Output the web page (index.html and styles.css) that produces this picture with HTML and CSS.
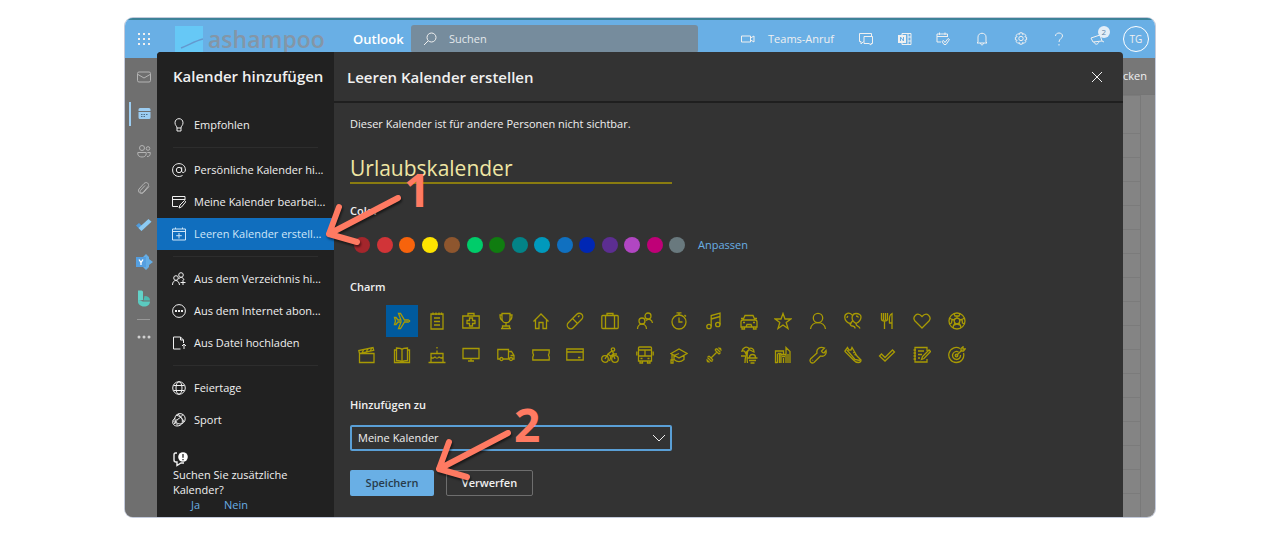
FILE: index.html
```html
<!DOCTYPE html>
<html lang="de">
<head>
<meta charset="utf-8">
<title>Kalender hinzufügen</title>
<link rel="stylesheet" href="styles.css">
</head>
<body>
<main class="window">
  <div class="app">
    <header class="topbar">
      <button class="waffle" aria-label="App-Startfeld"><svg width="14" height="14" viewBox="0 0 14 14" fill="currentColor"><path d="M1 1h2v2H1zM6 1h2v2H6zM11 1h2v2h-2zM1 6h2v2H1zM6 6h2v2H6zM11 6h2v2h-2zM1 11h2v2H1zM6 11h2v2H6zM11 11h2v2h-2z"/></svg></button>
      <div class="brand"><svg width="28" height="26" viewBox="0 0 28 26"><path fill="#66c8f6" d="M0 0h28v26H0z"/><path d="M6 22C14 19 20 15 28 13" stroke="#6499cf" stroke-width="1.5" fill="none"/></svg><span>ashampoo</span></div>
      <span class="product">Outlook</span>
      <label class="search"><svg width="14" height="14" viewBox="0 0 14 14" class="line"><circle cx="8.5" cy="5.5" r="4.5"/><path d="M5 9l-4 4"/></svg><input type="text" placeholder="Suchen" aria-label="Suchen"></label>
      <button class="teams"><svg width="14" height="8" viewBox="0 0 14 8" class="line"><path d="M.5 1h9v6h-9zM9.500 3l3.500-2v6l-3.500-2"/></svg><span>Teams-Anruf</span></button>
      <nav class="tools" aria-label="Werkzeuge">
        <button aria-label="Chat"><svg width="14" height="14" viewBox="0 0 14 14" class="line"><path d="M4.500 9.500L2 12V9.500H.5v-8h12V4M5 4.500h8.500v7H12V13l-2-1.500H5z"/></svg></button>
        <button aria-label="OneNote"><svg width="14" height="14" viewBox="0 0 14 14" class="line"><path d="M4 3V1.500h9v11H4V11M10 1.500v11M10 5h3M10 9h3"/><path d="M0 3h8v8H0z" fill="currentColor" stroke="none"/><path d="M2.500 9V5l3 4V5" stroke="#69afe5"/></svg></button>
        <button aria-label="Mein Tag"><svg width="14" height="14" viewBox="0 0 14 14" class="line"><path d="M5 10H1V2h10.500v3M1 4.500h10M3.500.5V3M9 .5V3M6 9.500l2 3h2l3.500-5-1.500-1-3 4-1.500-2z"/></svg></button>
        <button aria-label="Benachrichtigungen"><svg width="12" height="14" viewBox="0 0 12 14" class="line"><path d="M2 10V5c0-5 8-5 8 0v5l1 1H1zM4.500 11c0 2.500 3 2.500 3 0"/></svg></button>
        <button aria-label="Einstellungen"><svg width="14" height="14" viewBox="0 0 14 14" class="line"><path d="M5.800.8h2.400l.4 1.700 1.500-.9 1.700 1.700-.9 1.500 1.700.4v2.600l-1.700.4.900 1.500-1.700 1.700-1.500-.9-.4 1.700H5.800l-.4-1.700-1.500.9-1.700-1.700.9-1.500-1.700-.4V5.200l1.700-.4-.9-1.500 1.700-1.700 1.500.9z"/><circle cx="7" cy="6.500" r="2.200"/></svg></button>
        <button aria-label="Hilfe"><svg width="10" height="14" viewBox="0 0 10 14" class="line"><path d="M1.500 4c0-4 7-4 7 0 0 2.500-3.500 2.500-3.500 6M5 12v1.500"/></svg></button>
        <button aria-label="Neuigkeiten" class="news"><svg width="16" height="14" viewBox="0 0 16 14" class="line"><path d="M1 6l9-3 2 6-9 1zM4 10c1 3 4 3 5-.5M12 9l2 1"/></svg><span class="badge">2</span></button>
      </nav>
      <button class="avatar">TG</button>
    </header>
    <div class="workspace">
      <nav class="rail" aria-label="Apps">
        <button aria-label="E-Mail"><svg width="14" height="12" viewBox="0 0 14 12" class="line"><rect x=".5" y="1" width="13" height="10" rx="1.500"/><path d="M1 3.500l6 3.500 6-3.500"/></svg></button>
        <button aria-label="Kalender" class="current"><svg width="13" height="13" viewBox="0 0 13 13"><path fill="currentColor" d="M2 1h9q1.500 0 1.500 1.500V4H.5V2.500Q.5 1 2 1zM.5 5h12v5.500q0 1.500-1.500 1.500H2Q.5 12 .5 10.500z"/><path d="M3 7.500h7M3 9.500h4.500" stroke="#4f6f88" stroke-dasharray="1.500 1"/></svg></button>
        <button aria-label="Personen"><svg width="14" height="14" viewBox="0 0 14 14" class="line"><circle cx="5" cy="4" r="2.500"/><circle cx="11" cy="4.500" r="1.800"/><path d="M.8 8.500h8.400V10c0 4-8.400 4-8.400 0zM10 12.500c2.500 0 3.300-1 3.300-4h-3"/></svg></button>
        <button aria-label="Dateien"><svg width="14" height="14" viewBox="0 0 14 14" class="line"><path d="M2 8l5-5.500c2.500-2.500 6 .5 4 3L6 11.500c-1.500 1.500-4-.5-2.500-2.200L8 4.500M2 8c-2 3 2 6 4.500 3.500l5.500-6"/></svg></button>
        <button aria-label="Aufgaben"><svg width="16" height="14" viewBox="0 0 16 14"><path d="M0 7.500L3 5l3.500 3.500L5.500 13z" fill="#4f9bdc"/><path d="M5.500 13L2.500 10 12.500 1l3 2.800z" fill="#8ccbf4"/></svg></button>
        <button aria-label="Viva Engage"><svg width="17" height="16" viewBox="0 0 17 16"><path d="M10 0l3 3v2l4 3-4 3v2l-3 3-3-3V3z" fill="#65aee6"/><path d="M0 3h10v10H0z" fill="#559fe0"/><path d="M3 5.500l2 3 2-3M5 8.500V11" stroke="#fff" fill="none" stroke-width="1.300"/></svg></button>
        <button aria-label="Bookings"><svg width="14" height="17" viewBox="0 0 14 17"><path d="M1 .5h3.500q1.500 0 1.500 1.500v8L1 11z" fill="#63d2c8"/><path d="M7.500 6C11 6 13 7.500 13 10.500H6.500z" fill="#4db9b0"/><path d="M1 10l5 1.500h7c0 3-2.500 5-6 5S1 14 1 12z" fill="#5bcac0"/></svg></button>
        <hr>
        <button class="more" aria-label="Weitere Apps"><svg width="14" height="4" viewBox="0 0 14 4" fill="currentColor"><circle cx="2" cy="2" r="1.500"/><circle cx="7" cy="2" r="1.500"/><circle cx="12" cy="2" r="1.500"/></svg></button>
      </nav>
      <div class="calendar">
        <div class="commands"><button>Drucken</button></div>
        <div class="hours"></div>
      </div>
    </div>
  </div>

  <section class="dialog" role="dialog" aria-labelledby="dialog-title">
    <aside class="side">
      <h2>Kalender hinzufügen</h2>
      <nav>
        <button class="item"><svg width="14" height="14" viewBox="0 0 14 14" class="line"><path d="M5 10C5 8 3 7.500 3 4.800c0-5.500 8-5.500 8 0C11 7.500 9 8 9 10zM5 10v3h4v-3"/></svg>Empfohlen</button>
        <hr>
        <button class="item"><svg width="14" height="14" viewBox="0 0 14 14" class="line"><circle cx="7" cy="7" r="2.700"/><path d="M9.700 4.200V8c0 2.500 3.500 2 3.700-1C13.400-1.500.6-1.500.6 7c0 6 6 7.800 9.900 5.500"/></svg>Persönliche Kalender hi...</button>
        <button class="item"><svg width="14" height="14" viewBox="0 0 14 14" class="line"><path d="M6 11.500H.5v-10h12.500V5M.5 4.500H13M7 13l1-3 4.500-4.500 1.300 1.300L9.500 12z"/></svg>Meine Kalender bearbei...</button>
        <button class="item selected"><svg width="14" height="14" viewBox="0 0 14 14" class="line"><path d="M.5 2h13v11H.5zM.5 4.500h13M3.500.5V2M10.500.5V2M7 6v5.500M4.200 8.700h5.600"/></svg>Leeren Kalender erstell...</button>
        <hr>
        <button class="item"><svg width="14" height="14" viewBox="0 0 14 14" class="line"><circle cx="4" cy="6" r="2.300"/><circle cx="9" cy="3" r="2.300"/><path d="M.5 13c0-6 6.500-6 7 0M6.500 7c2-2.500 4.500-2 5.500 1M11 8v5M8.500 10.500h5"/></svg>Aus dem Verzeichnis hi...</button>
        <button class="item"><svg width="14" height="14" viewBox="0 0 14 14" class="line"><circle cx="7" cy="7" r="6.400"/><path d="M3 7h8" stroke-width="1.800" stroke-dasharray="2 1"/></svg>Aus dem Internet abon...</button>
        <button class="item"><svg width="14" height="14" viewBox="0 0 14 14" class="line"><path d="M8.500 13H1.500V1h7l3 3v3M8.500 1v3h3M12 13V8.500M10 10l2-2 2 2"/></svg>Aus Datei hochladen</button>
        <hr>
        <button class="item"><svg width="14" height="14" viewBox="0 0 14 14" class="line"><circle cx="7" cy="7" r="6.300"/><ellipse cx="7" cy="7" rx="3" ry="6.300"/><path d="M1.500 4.500h11M1.500 9.500h11"/></svg>Feiertage</button>
        <button class="item"><svg width="14" height="14" viewBox="0 0 14 14" class="line"><circle cx="8" cy="5.800" r="5.200"/><path d="M4 2c4 1 7 4 8 7M11 1.500C9 4 7 6 3.500 7.500M6 1c4 3 5 6 4 9.500M3 5C-1 8 .5 13 5 13c2.500 0 4-1 5-2.500M1 7.500l5 5M2 11l3-3.500"/></svg>Sport</button>
      </nav>
      <div class="feedback">
        <svg width="16" height="16" viewBox="0 0 16 16" class="line"><path d="M4 2H2.500Q1 2 1 4v5q0 2 2 2h1v3.500L8 12h3" stroke-width="1.400"/><circle cx="10" cy="6" r="4.800" fill="#fff" stroke="none"/><path d="M10 3v3.700M10 8v1.200" stroke="#212121" stroke-width="1.300"/></svg>
        <p>Suchen Sie zusätzliche Kalender?</p>
        <div class="answers"><a href="#">Ja</a><a href="#">Nein</a></div>
      </div>
    </aside>

    <form class="content">
      <header class="heading">
        <h1 id="dialog-title">Leeren Kalender erstellen</h1>
        <button type="button" class="close" aria-label="Schließen"><svg width="12" height="12" viewBox="0 0 12 12" class="line"><path d="M1 1l10 10M11 1L1 11"/></svg></button>
      </header>
      <div class="fields">
        <p class="hint">Dieser Kalender ist für andere Personen nicht sichtbar.</p>
        <input class="name" type="text" value="Urlaubskalender" aria-label="Kalendername">
        <h3>Color</h3>
        <div class="colors">
          <div class="swatches" role="radiogroup" aria-label="Color">
            <input type="radio" name="color" class="c-darkred" aria-label="Dunkelrot">
            <input type="radio" name="color" class="c-red" aria-label="Rot">
            <input type="radio" name="color" class="c-orange" aria-label="Orange">
            <input type="radio" name="color" class="c-yellow" aria-label="Gelb">
            <input type="radio" name="color" class="c-brown" aria-label="Braun">
            <input type="radio" name="color" class="c-mint" aria-label="Hellgrün">
            <input type="radio" name="color" class="c-green" aria-label="Grün">
            <input type="radio" name="color" class="c-teal" aria-label="Petrol">
            <input type="radio" name="color" class="c-cyan" aria-label="Cyan">
            <input type="radio" name="color" class="c-blue" aria-label="Blau">
            <input type="radio" name="color" class="c-navy" aria-label="Dunkelblau">
            <input type="radio" name="color" class="c-purple" aria-label="Violett">
            <input type="radio" name="color" class="c-orchid" aria-label="Flieder">
            <input type="radio" name="color" class="c-magenta" aria-label="Magenta">
            <input type="radio" name="color" class="c-gray" aria-label="Grau">
          </div>
          <a href="#">Anpassen</a>
        </div>
        <h3>Charm</h3>
        <div class="charms" role="radiogroup" aria-label="Charm">
          <label class="first"><input type="radio" name="charm" aria-label="Flugzeug" checked><svg viewBox="0 0 18 18"><path d="M1.500 5.500H3L5 8h3L5.500 1.500h2L11.500 8h4q2.500 1 0 2h-4l-4 6.500h-2L8 10H5l-2 2.500H1.500L2.500 9z"/></svg></label>
          <label><input type="radio" name="charm" aria-label="Liste"><svg viewBox="0 0 18 18"><path d="M3 2h12v15H3zM5 .5V3M8 .5V3M11 .5V3M13.500.5V3M6 6h6M6 9.500h6M6 13h6"/></svg></label>
          <label><input type="radio" name="charm" aria-label="Erste Hilfe"><svg viewBox="0 0 18 18"><path d="M.8 4h16.400v12H.8zM6 4V1.500h6V4M7.500 6h3v2.500H13v3h-2.500V14h-3v-2.500H5v-3h2.500z"/></svg></label>
          <label><input type="radio" name="charm" aria-label="Pokal"><svg viewBox="0 0 18 18"><path d="M5 1.500h8V7c0 5-8 5-8 0zM5 3H3c0 4 1 5.500 3 5.500M13 3h2c0 4-1 5.500-3 5.500M9 11v3M5.500 16.500V14h7v2.500zM4 16.500h10"/></svg></label>
          <label><input type="radio" name="charm" aria-label="Haus"><svg viewBox="0 0 18 18"><path d="M1.500 9.500L9 2l7.500 7.500M3.500 8v8.500H7v-6h4v6h3.500V8"/></svg></label>
          <label><input type="radio" name="charm" aria-label="Tablette"><svg viewBox="0 0 18 18"><rect x="5.500" y="-.5" width="7" height="19" rx="3.500" transform="rotate(45 9 9)"/><path d="M6.500 6.500l5 5M12 5l1.500-1.500"/></svg></label>
          <label><input type="radio" name="charm" aria-label="Koffer"><svg viewBox="0 0 18 18"><rect x=".8" y="3.500" width="16.400" height="13" rx="1"/><path d="M6 3.500v-2h6v2M4.500 3.500v13M13.500 3.500v13"/></svg></label>
          <label><input type="radio" name="charm" aria-label="Personen"><svg viewBox="0 0 18 18"><circle cx="6" cy="9" r="3"/><circle cx="12" cy="4" r="3"/><path d="M1.500 17c0-6.500 9-6.500 9 0M10 8.500C13 6 16 8 16.500 11"/></svg></label>
          <label><input type="radio" name="charm" aria-label="Stoppuhr"><svg viewBox="0 0 18 18"><circle cx="9" cy="10" r="7"/><path d="M6.500.8h5M9 1v2M9 5.500V10h3.500M14.500 3L16 4.500"/></svg></label>
          <label><input type="radio" name="charm" aria-label="Musik"><svg viewBox="0 0 18 18"><circle cx="4" cy="14.500" r="2.200"/><circle cx="12.800" cy="12.500" r="2.200"/><path d="M6.200 14.500V3.500L15 1v11.500M6.200 7L15 4.500"/></svg></label>
          <label><input type="radio" name="charm" aria-label="Auto"><svg viewBox="0 0 18 18"><path d="M3 8l2-4.500h8L15 8M1 10q0-2 2-2h12q2 0 2 2v5H1zM2 15v2h2.500v-2M13.500 15v2H16v-2M6 15l1-2.500h4l1 2.500M1 6.500h2.500M14.500 6.500H17"/><path d="M3 10.500h2M13 10.500h2"/></svg></label>
          <label><input type="radio" name="charm" aria-label="Stern"><svg viewBox="0 0 18 18"><path d="M9 1.500l2 5.500h5.800l-4.600 3.500 1.800 6L9 13l-5 3.500 1.800-6L1.200 7H7z"/></svg></label>
          <label><input type="radio" name="charm" aria-label="Person"><svg viewBox="0 0 18 18"><circle cx="9" cy="6" r="4.700"/><path d="M1.500 17c1-8.500 14-8.500 15 0"/></svg></label>
          <label><input type="radio" name="charm" aria-label="Ballons"><svg viewBox="0 0 18 18"><path d="M8.500 3.500C5.500-1 .5 1.500.8 5.500.8 8.500 3.500 11 6.500 11.500l2-2.500M12 1.500c-4 0-5 5-2.500 8l2.500 2c3-1.500 5-3.500 5-6.500 0-2-2-3.500-5-3.500zM5.500 12.500l2-1M6.500 11.500c-1 4 5 1 4.500 5M12 11.500c0 3.500 3 1.500 4 5M12 4c1.500 0 2 .5 2.500 1.500M4 4c-1 1-1 1.500-1 2"/></svg></label>
          <label><input type="radio" name="charm" aria-label="Besteck"><svg viewBox="0 0 18 18"><path d="M3.500 1v6q0 2 3 2t3-2V1M5.500 1v7M7.500 1v7M6.500 9v8M14 17V1.500c-3 1-3 5-2.500 9.500H14"/></svg></label>
          <label><input type="radio" name="charm" aria-label="Herz"><svg viewBox="0 0 18 18"><path d="M9 16L2 9C-1 5 4-1 9 4.500 14-1 19 5 16 9z"/></svg></label>
          <label><input type="radio" name="charm" aria-label="Fußball"><svg viewBox="0 0 18 18"><circle cx="9" cy="9" r="8"/><circle cx="9" cy="9" r="2.800"/><path d="M6 1.500L7 4h4l1-2.500M16.500 6L14 7.500l.5 3.500 2.500 1M1.500 6L4 7.500 3.500 11 1 12M5 16l.5-2.500L9 12l3.500 1.500L13 16M9 4v2M4 7.500l2.500.5M14 7.500L11.500 8M5.500 13.500L7 11M12.500 13.500L11 11"/></svg></label>
          <label><input type="radio" name="charm" aria-label="Film"><svg viewBox="0 0 18 18"><path d="M1.500 7.500h14.500v9H1.500zM1.500 7.500L.8 4.500 15 1.500l.7 2.800zM4 6.500L6 3.500M8 6l2-3M12 5l2-3"/></svg></label>
          <label><input type="radio" name="charm" aria-label="Buch"><svg viewBox="0 0 18 18"><path d="M9 3.500C8 2 5 2 3.500 2v12.500c2 0 4.500 0 5.500 1.500 1-1.500 3.500-1.500 5.500-1.500V2C13 2 10 2 9 3.500zM9 3.500V16M3.500 4h-2v12.500h15V4h-2"/></svg></label>
          <label><input type="radio" name="charm" aria-label="Torte"><svg viewBox="0 0 18 18"><path d="M3 16V7.500h12V16M.5 16.500h17M9 4.500v3M9 1v1.500M3 11c2 2.500 3.500 0 4 0 1 1.500 3 1.500 4 0 1 0 2 2.500 4 0"/></svg></label>
          <label><input type="radio" name="charm" aria-label="Bildschirm"><svg viewBox="0 0 18 18"><path d="M1 2.500h16v10H1zM9 12.500v2.500M6 15h6"/></svg></label>
          <label><input type="radio" name="charm" aria-label="Lieferwagen"><svg viewBox="0 0 18 18"><path d="M3 13H.8V3.500h10.700V13H6M11.500 5.500h3l2.500 4V13h-1.500M13.500 9.500H17M11.500 13h1"/><circle cx="4.500" cy="13" r="1.500"/><circle cx="14" cy="13" r="1.500"/></svg></label>
          <label><input type="radio" name="charm" aria-label="Ticket"><svg viewBox="0 0 18 18"><path d="M.8 4h16.400v3q-1.500 2 0 4v3H.8v-3q1.500-2 0-4z"/></svg></label>
          <label><input type="radio" name="charm" aria-label="Kreditkarte"><svg viewBox="0 0 18 18"><path d="M.8 3h16.400v11H.8zM.8 6h16.400M12 11.500h2.500"/></svg></label>
          <label><input type="radio" name="charm" aria-label="Fahrrad"><svg viewBox="0 0 18 18"><circle cx="4" cy="13" r="3.300"/><circle cx="14" cy="13" r="3.300"/><circle cx="12" cy="3.500" r="1.700"/><path d="M4 13l3-5 4-3 2 3h3M7 8l3 2.500L8.500 15M10 10.500L12 8l2 5"/></svg></label>
          <label><input type="radio" name="charm" aria-label="Bus"><svg viewBox="0 0 18 18"><path d="M2.500 2q0-1 1-1h11q1 0 1 1v13h-13zM2.500 4h13M2.500 10h13M9 4v6M4 15v2h2.500v-2M11.500 15v2H14v-2M.8 5.500v4M17.200 5.500v4M4.500 12.500h2M11.500 12.500h2"/></svg></label>
          <label><input type="radio" name="charm" aria-label="Studium"><svg viewBox="0 0 18 18"><path d="M1 7.500L9 3l8 4.500L9 12zM4 9.500v4c3 2.500 7 2.500 10 0v-4M2 8v6M1 14h2v3H1zM9 7.500l-5 2"/></svg></label>
          <label><input type="radio" name="charm" aria-label="Hantel"><svg viewBox="0 0 18 18"><path d="M6.500 11.500l5-5M10 4l4 4M11.500 2.500l4 4M4 10l4 4M2.500 11.500l4 4M10 4l1.500-1.500M14 8l1.500-1.500M4 10l-1.500 1.500M8 14l-1.500 1.500M13.500 1.500l3 3M1.500 13.500l3 3M15 3l1-1M3 15l-1 1"/></svg></label>
          <label><input type="radio" name="charm" aria-label="Strand"><svg viewBox="0 0 18 18"><path d="M2 5c1-4 5-5 7-2.500 3-1 5 .5 5 3.500L9 3.500 5.500 7C5 5 4 4.500 2 5zM9 3.500C6 7 5 12 5 17M7.500 6C7 10 7 14 7.500 17M1 10h4M7.500 12h10M9.500 11.500c0-4 6-4 6 0M9 14.500h7M10.500 17h4"/></svg></label>
          <label><input type="radio" name="charm" aria-label="Stadt"><svg viewBox="0 0 18 18"><path d="M1.500 17V5h8v3M3.500 17V8M5.500 7.500V17M7 17V8.500h5V17M9.500 17v-5M12 8V1.500l4 4V17M14 8v9M3.500 7.500h4M1 16.500h2.500M8 10.500h3"/></svg></label>
          <label><input type="radio" name="charm" aria-label="Werkzeug"><svg viewBox="0 0 18 18"><path d="M15.500 2l-3 3 1 1.500 1.500.5 2-2.500c1 4-2 6.500-5.500 5.500L5 16.500C2.500 18 0 15.500 1.500 13L8 7C7 3 11 0 15.500 2z"/><path d="M3.500 14.500l.5-.5"/></svg></label>
          <label><input type="radio" name="charm" aria-label="Laufschuh"><svg viewBox="0 0 18 18"><path d="M1 5l2.500-3.500L5 4h2l1-2.500L13 10l4 4q0 2.500-2.500 2.500-3 0-5-2.500L1 5.500zM3 4l8 9.500 5 1M9 7l2-1M10.500 9l1.500-1"/></svg></label>
          <label><input type="radio" name="charm" aria-label="Haken"><svg viewBox="0 0 18 18"><path d="M1.500 10l2-2L7 11.500 14.500 4l2 2L7 15z"/></svg></label>
          <label><input type="radio" name="charm" aria-label="Notiz"><svg viewBox="0 0 18 18"><path d="M14 5V1.500H2V16h12v-3M.5 4H3M.5 7H3M.5 10H3M.5 13H3M5 5h6M5 8.500h4M5 12h2M8.500 13.500l1-3L16 4l1.500 1.500L11 12.500z"/></svg></label>
          <label><input type="radio" name="charm" aria-label="Ziel"><svg viewBox="0 0 18 18"><path d="M12 2.500A7.500 7.500 0 1 0 15.500 7M10.500 6A4 4 0 1 0 12.500 9M8.500 9.500L14 4M13 5V2.500L15 .8V3h2.200L15.500 5z"/><circle cx="8.500" cy="9.500" r="1.300"/></svg></label>
        </div>
        <label class="caption" for="group">Hinzufügen zu</label>
        <div class="select"><select id="group"><option>Meine Kalender</option></select><svg width="14" height="8" viewBox="0 0 14 8" class="line"><path d="M1 1l6 6 6-6"/></svg></div>
        <div class="actions"><button type="submit" class="primary">Speichern</button><button type="reset" class="secondary">Verwerfen</button></div>
      </div>
    </form>
  </section>

  <div class="step step-one"><svg width="84" height="56" viewBox="0 0 84 56"><path d="M75 9L6 45M16 18L6 45l28 8"/></svg><span>1</span></div>
  <div class="step step-two"><svg width="84" height="56" viewBox="0 0 84 56"><path d="M75 9L6 45M16 18L6 45l28 8"/></svg><span>2</span></div>
</main>
</body>
</html>
```
FILE: styles.css
```css
* { box-sizing: border-box; }
body {
  margin: 0;
  padding: 18px 125px;
  background: #fff;
  color: #f0f0f0;
  font: 11px/16px "Open Sans", "Noto Sans", sans-serif;
}
button, input, select { font: inherit; color: inherit; }
button { padding: 0; border: 0; background: none; }
h1, h2, h3, p { margin: 0; font-weight: 600; }
a { color: #69afe5; text-decoration: none; }
svg { flex: none; }
.line { fill: none; stroke: currentColor; stroke-width: 1; }

.window {
  position: relative;
  display: grid;
  border-radius: 8px;
  overflow: hidden;
  box-shadow: 0 0 0 1px #c3cadb;
}
.app, .dialog { grid-area: 1 / 1; }
.app { display: flex; flex-direction: column; min-width: 0; }

.topbar {
  display: flex;
  align-items: center;
  height: 40px;
  padding-right: 6px;
  border-top: 2px solid #3d8298;
  background: #69afe5;
}
.topbar svg { display: block; }
.waffle { margin-left: 12px; }
.brand {
  display: flex;
  gap: 5px;
  width: 178px;
  height: 26px;
  margin-left: 24px;
  color: #8496a7;
  font-size: 23px;
  font-weight: 600;
  line-height: 26px;
}
.product { width: 58px; font-size: 13px; font-weight: 600; color: #fff; }
.search {
  display: flex;
  align-items: center;
  gap: 12px;
  flex: 1;
  max-width: 287px;
  height: 28px;
  padding: 0 12px;
  border-radius: 3px;
  background: #768c9d;
}
.search input { flex: 1; min-width: 0; padding: 0; border: 0; background: none; outline: 0; }
.search input::placeholder { color: #e3e8ec; opacity: 1; }
.teams { display: flex; align-items: center; gap: 13px; margin-left: auto; margin-right: 13px; }
.tools { display: grid; grid-template-columns: repeat(7, 1fr); width: 270px; justify-items: center; }
.news { position: relative; }
.badge {
  position: absolute;
  top: -6px;
  right: -4px;
  width: 12px;
  border-radius: 6px;
  background: #e3eef8;
  color: #5f86a8;
  font-size: 8px;
  line-height: 12px;
}
.avatar { width: 26px; height: 26px; margin-left: 6px; border: 1px solid #fff; border-radius: 50%; font-size: 10px; }

.workspace { display: flex; flex: 1; background: #848484; }
.rail {
  display: flex;
  flex-direction: column;
  width: 32px;
  background: #6f6f6f;
  color: #b4b4b4;
}
.rail button { display: grid; place-items: center; height: 37px; padding-left: 6px; }
.rail .current {
  color: #9ccdf2;
  background: linear-gradient(#9ccdf2, #9ccdf2) 4px center / 2px 24px no-repeat;
}
.rail hr { width: 13px; margin: 2px 0 0 12px; border: 0; border-top: 1px solid #989898; }
.rail .more { height: 33px; color: #d0d0d0; }
.calendar { flex: 1; }
.commands { height: 37px; padding: 10px 8px; border-bottom: 1px solid #757575; background: #777; text-align: right; }
.hours {
  height: calc(100% - 37px);
  margin-right: 14px;
  border-right: 1px solid #797979;
  background: repeating-linear-gradient(transparent 0 23px, #7b7b7b 23px 24px) 0 15px;
}

.dialog {
  z-index: 1;
  display: flex;
  margin: 34px 32px 0;
  border-radius: 4px 4px 0 0;
  overflow: hidden;
  background: #333;
}
.side { width: 177px; padding-top: 14px; background: #212121; }
.side h2 { padding: 0 16px; font-size: 15px; line-height: 20px; white-space: nowrap; }
.side nav { margin-top: 23px; }
.item {
  display: flex;
  align-items: center;
  gap: 8px;
  width: 100%;
  height: 32px;
  padding-left: 15px;
  white-space: nowrap;
}
.item.selected { background: #106ebe; color: #cfe6f8; }
.side hr { margin: 6px 16px; border: 0; border-top: 1px solid #2d2d2d; }
.feedback { padding: 15px 16px 0; line-height: 15px; }
.feedback svg { display: block; }
.feedback p { font-weight: 400; }
.answers { display: flex; gap: 24px; padding-left: 18px; }

.content { flex: 1; min-width: 0; }
.heading {
  display: flex;
  justify-content: space-between;
  align-items: center;
  height: 51px;
  padding: 0 20px 0 13px;
  border-bottom: 2px solid #1f1f1f;
}
.heading h1 { font-size: 15px; line-height: 20px; }
.close svg { display: block; }
.fields { padding: 13px 16px 21px; }
.hint { font-weight: 400; }
.name {
  display: block;
  width: 322px;
  height: 31px;
  margin: 21px 0 19px;
  padding: 0;
  border: 0;
  border-bottom: 2px solid #8a7c10;
  outline: 0;
  background: none;
  color: #efe6a4;
  font-size: 21px;
}
.fields h3, .caption { font-size: 11px; font-weight: 600; line-height: 16px; }
.colors { display: flex; align-items: center; gap: 13px; margin: 18px 0 26px 4px; }
.swatches { display: flex; justify-content: space-between; width: 331px; }
.swatches input { appearance: none; width: 16px; height: 16px; margin: 0; border-radius: 50%; background: currentColor; }
.swatches .c-darkred { color: #a4262c; }
.swatches .c-red { color: #d13438; }
.swatches .c-orange { color: #f7630c; }
.swatches .c-yellow { color: #fde300; }
.swatches .c-brown { color: #8e562e; }
.swatches .c-mint { color: #00cc6a; }
.swatches .c-green { color: #107c10; }
.swatches .c-teal { color: #038387; }
.swatches .c-cyan { color: #0099bc; }
.swatches .c-blue { color: #1070c0; }
.swatches .c-navy { color: #0027b4; }
.swatches .c-purple { color: #5c2e91; }
.swatches .c-orchid { color: #b146c2; }
.swatches .c-magenta { color: #bf0077; }
.swatches .c-gray { color: #69797e; }
.charms {
  display: grid;
  grid-template-columns: repeat(18, 1fr);
  row-gap: 2px;
  width: 624px;
  margin: 10px 0 26px;
  justify-items: center;
}
.charms label { display: grid; place-items: center; width: 32px; height: 32px; }
.charms .first { grid-column: 2; }
.charms input { grid-area: 1 / 1; appearance: none; margin: 0; width: 32px; height: 32px; }
.charms input:checked { background: #005a9e; }
.charms svg { grid-area: 1 / 1; z-index: 1; width: 18px; height: 18px; fill: none; stroke: #a89a04; stroke-width: 1.3; }
.caption { display: block; }
.select { display: grid; width: 322px; margin: 12px 0 19px; align-items: center; }
.select select { grid-area: 1 / 1; appearance: none; height: 26px; padding: 0 6px; border: 2px solid #5a9fd6; border-radius: 2px; background: #333; }
.select svg { grid-area: 1 / 1; z-index: 1; justify-self: end; margin-right: 6px; pointer-events: none; }
.actions { display: flex; gap: 12px; }
.actions button { height: 26px; border-radius: 2px; font-weight: 600; }
.primary { width: 84px; background: #69afe5; color: #283c4c; }
.actions .secondary { width: 87px; border: 1px solid #6e6e6e; }

.step { position: absolute; z-index: 2; display: flex; color: #ff7a62; }
.step-one { left: 198px; top: 171px; }
.step-two { left: 308px; top: 406px; }
.step svg {
  fill: none;
  stroke: currentColor;
  stroke-width: 6;
  stroke-linecap: round;
  stroke-linejoin: round;
  filter: drop-shadow(1px 2px 1px #0008);
}
.step span { margin: -30px 0 0 -3px; font-size: 46px; font-weight: 700; line-height: 60px; }
```
